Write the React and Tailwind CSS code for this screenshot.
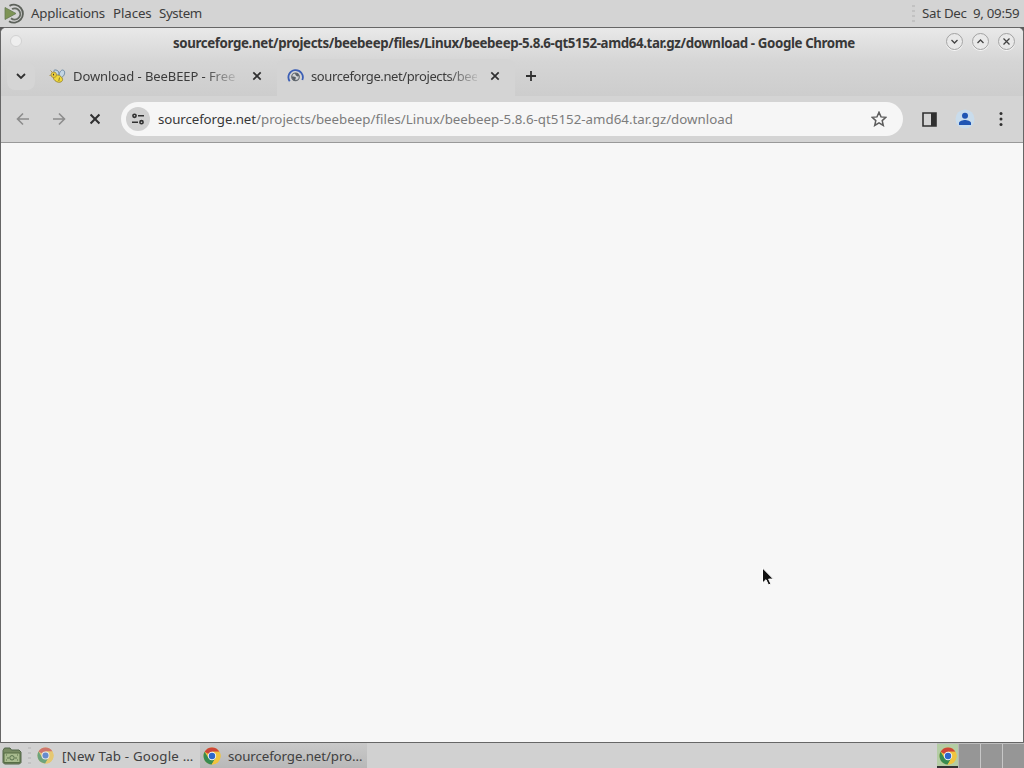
import React from 'react';

function MateLogo() {
  return (
    <svg width="22" height="22" viewBox="0 0 22 22" fill="none">
      <path d="M5.5 2.8A9 9 0 1 1 5 18.2" stroke="#5d625b" strokeWidth="1.9" />
      <path d="M8 6A5.6 5.6 0 1 1 7 15.2" stroke="#656b62" strokeWidth="1.9" />
      <path d="M1 4.5 12 10.5 1 16.5Z" fill="#7d9455" stroke="#657951" strokeWidth=".8" />
    </svg>
  );
}

function Chrome({ className }) {
  return (
    <svg className={className} viewBox="0 0 18 18">
      <circle cx="9" cy="9" r="8.5" fill="#f0c440" />
      <path d="M9 9 1.6 4.8A8.5 8.5 0 0 1 16.4 4.8H9Z" fill="#cd4638" />
      <path d="M1.6 4.8A8.5 8.5 0 0 0 8.7 17.5L12.5 11 9 9 5.5 11Z" fill="#388b50" />
      <path d="M9 4.8H16.4A8.5 8.5 0 0 1 8.7 17.5L12.6 11Z" fill="#f0c440" />
      <circle cx="9" cy="9" r="4.2" fill="#f4f4f4" />
      <circle cx="9" cy="9" r="3.2" fill="#2d67cb" />
    </svg>
  );
}

function Bee() {
  return (
    <svg width="17" height="16" viewBox="0 0 17 16">
      <path d="M8 8C4 4 4 1.5 7 2s3 3 3 5c1-5 4-6 5.2-4s0 6-4.2 7Z" fill="#c4d6e4" stroke="#6e8ba5" strokeWidth="1" />
      <ellipse cx="9" cy="10.6" rx="4.8" ry="3.4" transform="rotate(25 9 10.6)" fill="#f0d93a" stroke="#8e7c2c" strokeWidth=".7" />
      <circle cx="4.8" cy="6.8" r="2.8" fill="#e8cc3c" stroke="#987d2e" strokeWidth=".6" />
      <path d="M10.5 9.5 9.8 13" stroke="#88792d" />
      <path d="M3 4 1.5 2.5M2.5 7 .5 7.5" stroke="#a9975a" />
      <path d="M4.5 5.8v1.6" stroke="#393939" />
    </svg>
  );
}

function Loading() {
  return (
    <svg width="17" height="17" viewBox="0 0 17 17" fill="none">
      <path d="M2.7 13.3A7.2 7.2 0 1 1 15.3 12" stroke="#3c5fb5" strokeWidth="1.8" />
      <circle cx="8.5" cy="8.8" r="3.8" fill="#d2d4d6" stroke="#656b70" strokeWidth="1.2" />
      <path d="M5 8.5h2l2 1-1 3H6.7L5 10ZM8 5l3 .5 1.2 2.5-2 .4L8.5 7Z" fill="#5a6066" />
    </svg>
  );
}

function Cross({ size = 10, width = 1.7 }) {
  return (
    <svg width={size} height={size} viewBox="0 0 10 10">
      <path d="m1.3 1.3 7.4 7.4M8.7 1.3 1.3 8.7" stroke="#303031" strokeWidth={width} />
    </svg>
  );
}

function WindowButton({ path }) {
  return (
    <button className="flex size-[17px] items-center justify-center rounded-full border border-[#a2a2a2] bg-[#e9e9e9] shadow-[0_1px_0_#f6f6f6]">
      <svg width="9" height="9" viewBox="0 0 9 9" fill="none">
        <path d={path} stroke="#444" strokeWidth="1.3" />
      </svg>
    </button>
  );
}

function Grip() {
  return <div className="h-[18px] w-[3px] shrink-0 bg-[repeating-linear-gradient(#c2c2c2_0_2px,#d3d3d3_2px_5px)]" />;
}

function Arrow({ flipped }) {
  return (
    <svg className={flipped ? 'rotate-180' : ''} width="14" height="14" viewBox="0 0 14 14" fill="none">
      <path d="M13 7H2M7 1.5 1.5 7 7 12.5" stroke="#8c8c8c" strokeWidth="1.6" />
    </svg>
  );
}

function DesktopBar() {
  return (
    <header className="flex h-[27px] items-center bg-[#d4d4d4] pl-1 text-[13.3px] text-[#3d3d3d]">
      <MateLogo />
      <span className="ml-[5px] w-[82px] tracking-[-0.2px]">Applications</span>
      <span className="w-[46px] tracking-[-0.1px]">Places</span>
      <span className="tracking-[-0.4px]">System</span>
      <div className="ml-auto flex items-center">
        <Grip />
        <span className="ml-[7px] w-[102px] whitespace-pre tracking-[-0.28px]">Sat Dec  9, 09:59</span>
      </div>
    </header>
  );
}

function TitleBar() {
  return (
    <div className="flex h-[31px] items-start">
      <div className="mt-[7px] ml-[9px] size-3 rounded-full border border-[#d2d2d2] bg-[#eeeeee]" />
      <div className="mt-[6px] ml-[151px] w-[773px] text-[13.3px] leading-[18px] font-bold tracking-[-0.38px] whitespace-nowrap text-[#383838]">
        <span>sourceforge.net/projects/beebeep/files/Linux/beebeep-5.8.6-qt5152-amd64.tar.gz/download - Google Chrome</span>
      </div>
      <div className="mt-[5px] flex gap-[9px]">
        <WindowButton path="m1.5 3 3 3 3-3" />
        <WindowButton path="m1.5 6 3-3 3 3" />
        <WindowButton path="m1.5 1.5 6 6m0-6-6 6" />
      </div>
    </div>
  );
}

function TabStrip() {
  return (
    <div className="flex h-[37px] items-stretch text-[13px] text-[#3c3c3c]">
      <button className="mt-[3px] ml-[6px] flex size-7 items-center justify-center rounded-lg bg-[#d5d5d5]">
        <svg width="10" height="8" viewBox="0 0 10 8" fill="none"><path d="m1 2 4 4 4-4" stroke="#303030" strokeWidth="1.8" /></svg>
      </button>
      <div className="ml-[14px] flex w-[228px] items-center pb-[3px]">
        <Bee />
        <span className="mt-px ml-[7px] w-[164px] tracking-[-0.08px] whitespace-nowrap [mask-image:linear-gradient(to_right,black_80%,transparent_103%)]">Download - BeeBEEP - Free</span>
        <span className="ml-[15px]"><Cross /></span>
      </div>
      <div className="flex w-[238px] items-center rounded-t-lg bg-[#d4d4d4] pb-[3px] pl-[10px]">
        <Loading />
        <span className="mt-px ml-[7px] w-[166px] tracking-[-0.4px] whitespace-nowrap [mask-image:linear-gradient(to_right,black_82%,transparent_103%)]">sourceforge.net/projects/bee</span>
        <span className="ml-[13px]"><Cross /></span>
      </div>
      <svg className="mt-[11px] ml-[10px]" width="12" height="12" viewBox="0 0 12 12"><path d="M6 1v10M1 6h10" stroke="#303030" strokeWidth="1.8" /></svg>
    </div>
  );
}

function Toolbar() {
  return (
    <div className="flex h-[47px] items-center border-b border-[#999] bg-[#d4d4d4]">
      <div className="ml-[15px] flex w-[105px] items-center">
        <Arrow />
        <span className="ml-[22px]"><Arrow flipped /></span>
        <span className="ml-[23px]"><Cross size={12} width={1.7} /></span>
      </div>
      <div className="flex h-[34px] w-[782px] items-center rounded-full bg-[#f6f6f6]">
        <div className="ml-[5px] flex size-6 items-center justify-center rounded-full bg-[#d0d0d0]">
          <svg width="14" height="14" viewBox="0 0 14 14" fill="none" stroke="#303030" strokeWidth="1.6">
            <circle cx="3.5" cy="3.8" r="1.6" /><path d="M7 3.8h6M1 10.2h6" /><circle cx="10.5" cy="10.2" r="1.6" />
          </svg>
        </div>
        <span className="mt-px ml-2 w-[713px] text-[13.3px] tracking-[0.01px] whitespace-nowrap text-[#7c7c7c]"><span className="tracking-[-0.1px] text-[#383838]">sourceforge.net</span>/projects/beebeep/files/Linux/beebeep-5.8.6-qt5152-amd64.tar.gz/download</span>
        <svg width="16" height="16" viewBox="0 0 16 16" fill="none">
          <path d="m8 1.3 2 4.6 4.9.4-3.7 3.3 1.1 4.9L8 11.9l-4.3 2.6 1.1-4.9-3.7-3.3L6 5.9Z" stroke="#5d5d5d" strokeWidth="1.5" />
        </svg>
      </div>
      <svg className="ml-[19px]" width="15" height="15" viewBox="0 0 15 15"><path d="M1 1h13v13H1Z" fill="none" stroke="#303030" strokeWidth="1.6" /><path d="M9 1h5v13H9Z" fill="#303030" /></svg>
      <svg className="ml-[18px]" width="20" height="20" viewBox="0 0 20 20"><circle cx="10" cy="10" r="9.5" fill="#c9dcec" /><circle cx="10" cy="6.8" r="3" fill="#1f55b4" /><path d="M4 16v-2c0-2 4-3 6-3s6 1 6 3v2Z" fill="#1f55b4" /></svg>
      <svg className="ml-[24px]" width="4" height="16" viewBox="0 0 4 16" fill="#303030"><circle cx="2" cy="2.5" r="1.5" /><circle cx="2" cy="8" r="1.5" /><circle cx="2" cy="13.5" r="1.5" /></svg>
    </div>
  );
}

function TaskBar() {
  return (
    <footer className="flex h-[25px] items-center bg-[#d1d1d1] text-[13.3px] text-[#404040]">
      <svg className="ml-[2px]" width="20" height="20" viewBox="0 0 20 20" fill="none">
        <path d="M1 4.5 2.5 2H8l1.5 2H17l2 2v10.5L17.5 18H2.5L1 16.5Z" fill="#778a62" stroke="#52664a" />
        <path d="M2 7h16v9.5H2Z" fill="#a8bb8e" stroke="#566d45" />
        <circle cx="10" cy="11.8" r="2.2" stroke="#56704b" /><path d="M4 9h1m10 0h1M4 14h1m10 0h1M6 11v2m8-2v2" stroke="#748b62" strokeWidth="1.5" />
      </svg>
      <span className="ml-[6px]"><Grip /></span>
      <div className="ml-[6px] flex w-[163px] items-center">
        <Chrome className="size-[17px] opacity-65" />
        <span className="mt-[2px] ml-2 tracking-[0.2px] whitespace-nowrap">[New Tab - Google …</span>
      </div>
      <div className="flex h-[25px] w-[167px] items-center bg-linear-to-b from-[#c9c9c9] to-[#b8b8b8] pl-[3px]">
        <Chrome className="size-[18px]" />
        <span className="mt-[2px] ml-[7px] tracking-[-0.1px] whitespace-nowrap">sourceforge.net/pro…</span>
      </div>
      <div className="ml-auto flex h-[25px] border-t border-[#bebebe]">
        <div className="flex w-[21px] items-center justify-center border-b-2 border-[#333] bg-[#b4cda4] pt-px"><Chrome className="size-[18px]" /></div>
        <div className="w-[22px] border-l border-[#b5b5b5] bg-[#969696]" />
        <div className="w-[22px] border-l border-[#c7c7c7] bg-[#969696]" />
        <div className="w-[22px] border-l border-[#c7c7c7] bg-[#969696]" />
      </div>
    </footer>
  );
}

export default function App() {
  return (
    <div className="relative flex h-[768px] w-[1024px] flex-col overflow-hidden bg-[#5a5a5a] font-['Noto_Sans',sans-serif]">
      <DesktopBar />
      <main className="flex h-[716px] flex-col overflow-hidden rounded-t-md border border-[#666] bg-[#f7f7f7]">
        <div className="bg-linear-to-b from-[#e9e9e9] via-[#d5d5d5] via-50% to-[#cdcdcd]">
          <TitleBar />
          <TabStrip />
        </div>
        <Toolbar />
      </main>
      <TaskBar />
      <svg className="absolute top-[567px] left-[761px]" width="14" height="20" viewBox="0 0 14 20"><path d="M1.5 1v15l3.5-3.3L7.5 18l2.4-1.1-2.3-4.8h4.8Z" fill="#111" stroke="#fff" strokeWidth="1" /></svg>
    </div>
  );
}
